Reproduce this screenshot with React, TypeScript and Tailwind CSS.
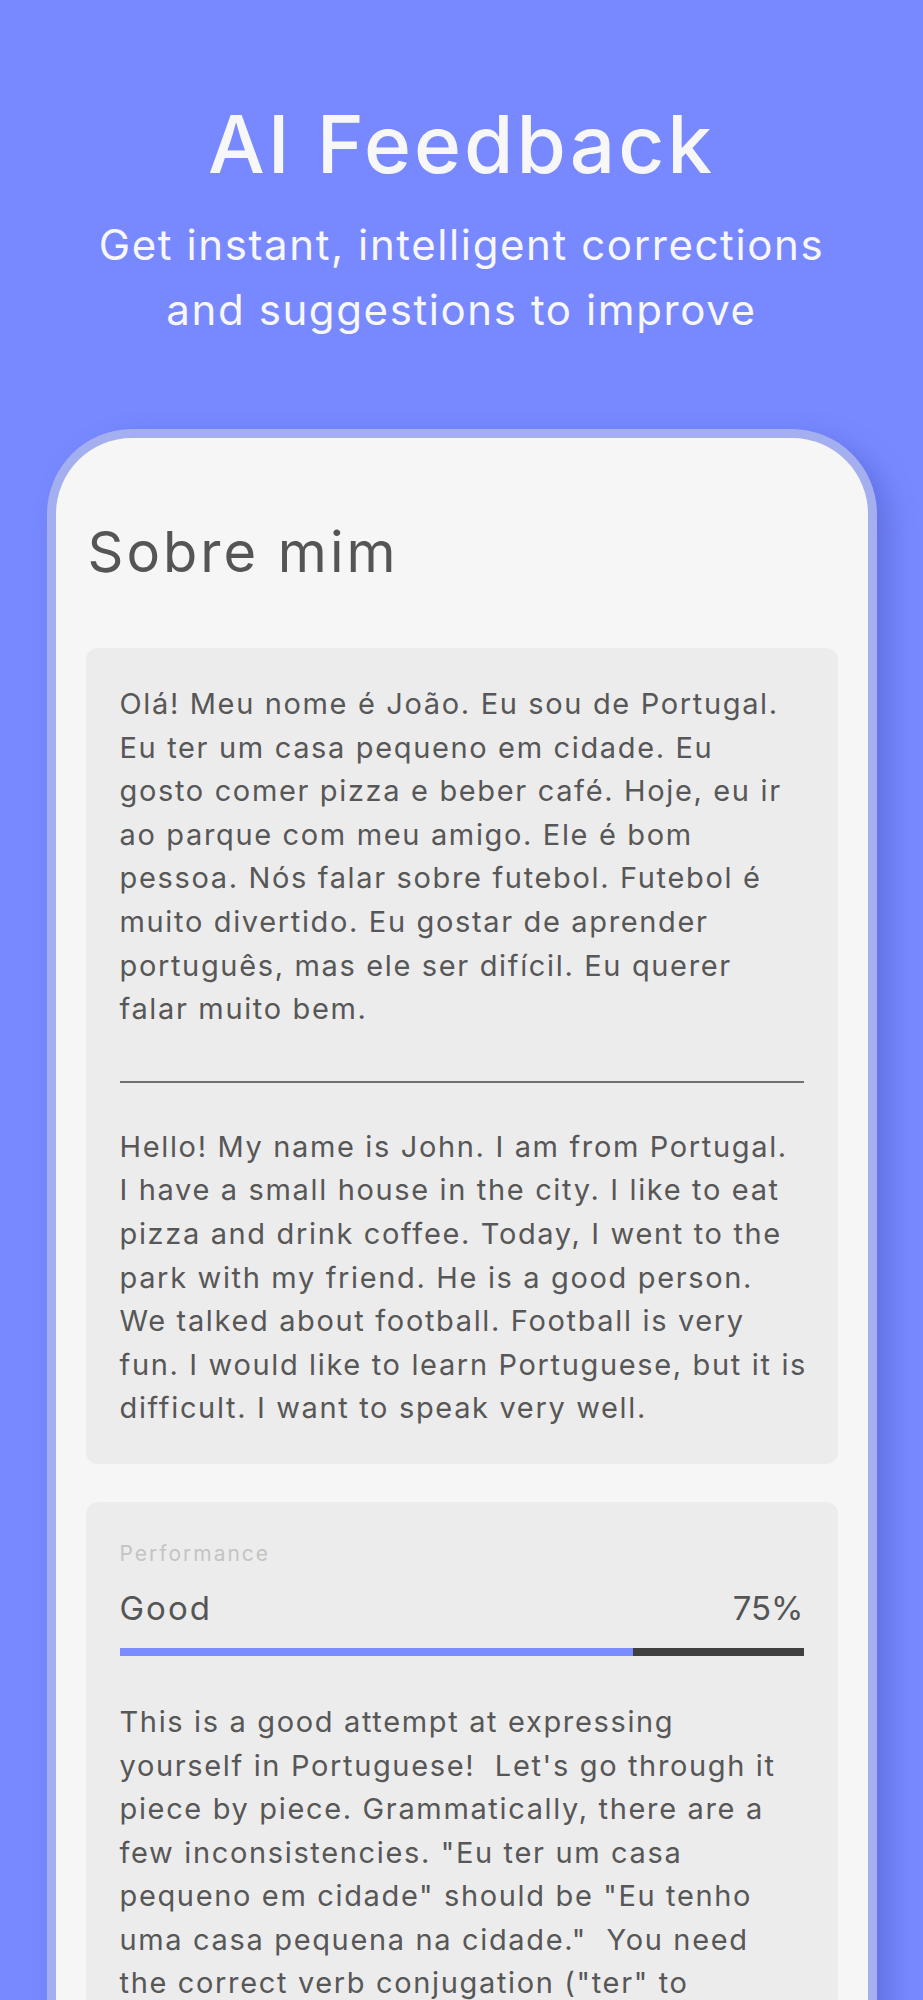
const PORTUGUESE = [
  "Olá! Meu nome é João. Eu sou de Portugal.",
  "Eu ter um casa pequeno em cidade. Eu",
  "gosto comer pizza e beber café. Hoje, eu ir",
  "ao parque com meu amigo. Ele é bom",
  "pessoa. Nós falar sobre futebol. Futebol é",
  "muito divertido. Eu gostar de aprender",
  "português, mas ele ser difícil. Eu querer",
  "falar muito bem.",
];

const ENGLISH = [
  "Hello! My name is John. I am from Portugal.",
  "I have a small house in the city. I like to eat",
  "pizza and drink coffee. Today, I went to the",
  "park with my friend. He is a good person.",
  "We talked about football. Football is very",
  "fun. I would like to learn Portuguese, but it is",
  "difficult. I want to speak very well.",
];

// the screen is cut off after the seventh line
const FEEDBACK = [
  "This is a good attempt at expressing",
  "yourself in Portuguese!  Let's go through it",
  "piece by piece. Grammatically, there are a",
  'few inconsistencies. "Eu ter um casa',
  'pequeno em cidade" should be "Eu tenho',
  'uma casa pequena na cidade."  You need',
  'the correct verb conjugation ("ter" to',
];

const SCORE = 75;

function Lines({ lines }: { lines: string[] }) {
  return (
    <p className="whitespace-pre text-[29px] leading-[43.6px] tracking-[1.65px] text-[#575757]">
      {lines.join("\n")}
    </p>
  );
}

export default function App() {
  return (
    <div className="h-[2000px] overflow-hidden bg-[#7889ff] font-['Inter',sans-serif]">
      <header className="pt-[104px] text-center text-[#f7f7f7]">
        <h1 className="text-[80px] font-medium leading-none tracking-[3px]">AI Feedback</h1>
        <p className="mt-[28px] text-[42px] font-normal leading-[65px] tracking-[1.6px]">
          Get instant, intelligent corrections
          <br />
          and suggestions to improve
        </p>
      </header>

      <div className="mx-auto mt-[87px] w-[830px] rounded-t-[85px] border-[9px] border-b-0 border-[#a4aff0] bg-[#f6f6f6] px-[30px] pb-10 pt-[86px] shadow-[14px_10px_26px_rgba(60,72,180,0.35)]">
        <h2 className="pl-[2px] text-[56px] leading-none tracking-[3px] text-[#555555]">Sobre mim</h2>

        {/* writing + translation */}
        <section className="mt-[68px] rounded-xl bg-[#ececec] p-[34px]">
          <Lines lines={PORTUGUESE} />
          <div className="mb-[42px] mt-[50px] h-[2px] bg-[#707070]" />
          <Lines lines={ENGLISH} />
        </section>

        {/* performance */}
        <section className="mt-[38px] rounded-xl bg-[#ececec] px-[34px] pt-[34px] pb-[34px]">
          <div className="text-[21px] leading-[35px] tracking-[2px] text-[#c4c4c4]">Performance</div>
          <div className="mt-[17px] flex items-baseline justify-between text-[33px] leading-[40px] text-[#555555]">
            <span className="tracking-[2px]">Good</span>
            <span>{SCORE}%</span>
          </div>
          <div className="mt-[20px] flex h-[8px] bg-[#404040]">
            <div className="h-full bg-[#7b8cff]" style={{ width: `${SCORE}%` }} />
          </div>
          <div className="mt-[44px]">
            <Lines lines={FEEDBACK} />
          </div>
        </section>
      </div>
    </div>
  );
}
